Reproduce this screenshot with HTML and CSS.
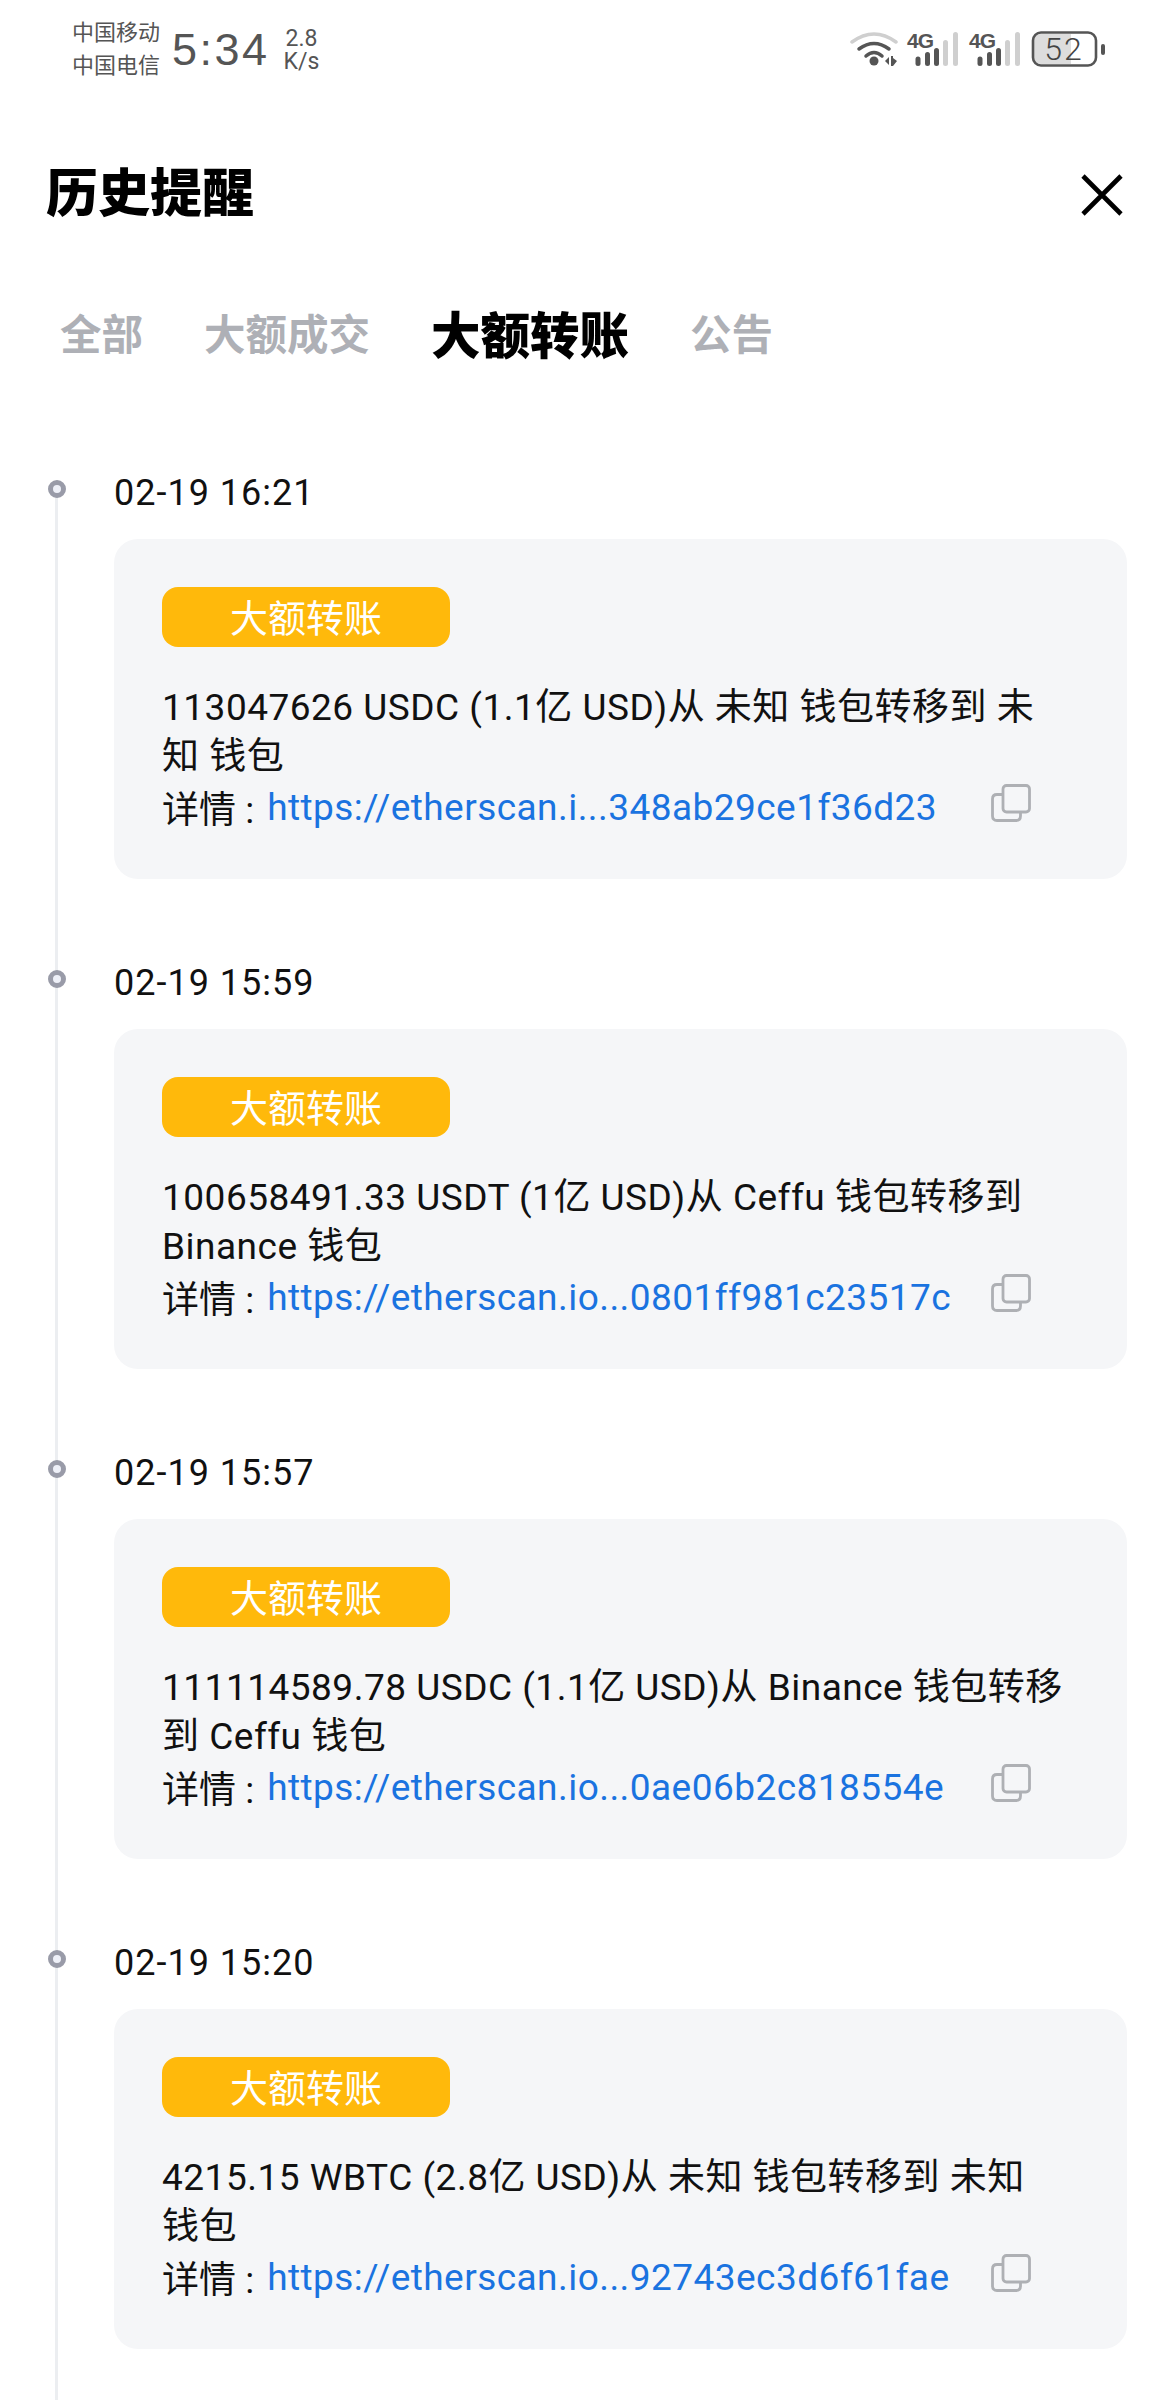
FILE: index.html
```html
<!DOCTYPE html>
<html lang="zh-CN">
<head>
    <meta charset="UTF-8">
    <meta name="viewport" content="width=device-width, initial-scale=1.0">
    <title>历史提醒</title>
    <link rel="stylesheet" href="styles.css">
</head>
<body>
    <div class="page">
        <div class="status-bar">
            <div class="carriers">
                <span>中国移动</span>
                <span>中国电信</span>
            </div>
            <div class="clock">5:34</div>
            <div class="speed">
                <span>2.8</span>
                <span>K/s</span>
            </div>
            <svg class="status-icons" width="256" height="48" viewBox="0 -8 256 48">
                <!-- wifi -->
                <path d="M2 12 Q24 -4 46 12" fill="none" stroke="#cfcfcf" stroke-width="3.5" stroke-linecap="round"/>
                <path d="M9 19 Q24 8 39 19" fill="none" stroke="#555" stroke-width="3.5" stroke-linecap="round"/>
                <path d="M16 26 Q24 19 32 26" fill="none" stroke="#555" stroke-width="3.5" stroke-linecap="round"/>
                <circle cx="24" cy="31" r="4.5" fill="#555"/>
                <path d="M35 31 L39 27 V35 Z M41 26 V36 H43 L47 31 L43 28 V26 Z" fill="#555"/>
                <!-- sim 1 -->
                <text class="net-label" x="57" y="18">4G</text>
                <rect x="65.5" y="26.5" width="5" height="9.5" rx="2.5" fill="#555"/>
                <rect x="75" y="22" width="5" height="14" rx="2.5" fill="#555"/>
                <rect x="84" y="18" width="5" height="18" rx="2.5" fill="#555"/>
                <rect x="93" y="10" width="5" height="26" rx="2.5" fill="#cfcfcf"/>
                <rect x="103" y="2" width="5" height="34" rx="2.5" fill="#cfcfcf"/>
                <!-- sim 2 -->
                <text class="net-label" x="119" y="18">4G</text>
                <rect x="127.5" y="26.5" width="5" height="9.5" rx="2.5" fill="#555"/>
                <rect x="137" y="22" width="5" height="14" rx="2.5" fill="#555"/>
                <rect x="146" y="18" width="5" height="18" rx="2.5" fill="#555"/>
                <rect x="155" y="10" width="5" height="26" rx="2.5" fill="#cfcfcf"/>
                <rect x="165" y="2" width="5" height="34" rx="2.5" fill="#cfcfcf"/>
                <!-- battery -->
                <path d="M191 4 H221 V34 H191 Q184 34 184 27 V11 Q184 4 191 4 Z" fill="#dddddd"/>
                <rect x="183" y="2.5" width="63" height="33" rx="8" fill="none" stroke="#555" stroke-width="2.6"/>
                <rect x="251" y="14" width="4" height="11" rx="2" fill="#555"/>
                <text class="battery-label" x="214" y="30" text-anchor="middle">52</text>
            </svg>
        </div>

        <div class="header">
            <h1>历史提醒</h1>
            <svg class="close" width="42" height="42" viewBox="0 0 42 42">
                <path d="M2 2 L40 40 M40 2 L2 40" stroke="#000" stroke-width="4.6" fill="none"/>
            </svg>
        </div>

        <div class="tabs">
            <span class="tab">全部</span>
            <span class="tab">大额成交</span>
            <span class="tab active">大额转账</span>
            <span class="tab">公告</span>
        </div>

        <div class="timeline">
            <div class="item">
                <div class="time">02-19 16:21</div>
                <div class="card">
                    <div class="tag">大额转账</div>
                    <p class="msg">113047626 USDC (1.1亿 USD)从 未知 钱包转移到 未<br>知 钱包</p>
                    <div class="detail">
                        <span>详情 :</span>
                        <a class="link">https://etherscan.i...348ab29ce1f36d23</a>
                        <svg class="copy" width="40" height="38" viewBox="0 0 40 38"><path d="M29.5 29 V32 Q29.5 36.5 25 36.500 H6 Q1.500 36.500 1.500 32 V15 Q1.500 10.500 6 10.500 H11" fill="none" stroke="#aeb0b4" stroke-width="2.800"/><rect x="12" y="1.500" width="26.500" height="26.500" rx="3.500" fill="none" stroke="#aeb0b4" stroke-width="2.800"/></svg>
                    </div>
                </div>
            </div>
            <div class="item">
                <div class="time">02-19 15:59</div>
                <div class="card">
                    <div class="tag">大额转账</div>
                    <p class="msg">100658491.33 USDT (1亿 USD)从 Ceffu 钱包转移到<br>Binance 钱包</p>
                    <div class="detail">
                        <span>详情 :</span>
                        <a class="link">https://etherscan.io...0801ff981c23517c</a>
                        <svg class="copy" width="40" height="38" viewBox="0 0 40 38"><path d="M29.5 29 V32 Q29.5 36.5 25 36.500 H6 Q1.500 36.500 1.500 32 V15 Q1.500 10.500 6 10.500 H11" fill="none" stroke="#aeb0b4" stroke-width="2.800"/><rect x="12" y="1.500" width="26.500" height="26.500" rx="3.500" fill="none" stroke="#aeb0b4" stroke-width="2.800"/></svg>
                    </div>
                </div>
            </div>
            <div class="item">
                <div class="time">02-19 15:57</div>
                <div class="card">
                    <div class="tag">大额转账</div>
                    <p class="msg">111114589.78 USDC (1.1亿 USD)从 Binance 钱包转移<br>到 Ceffu 钱包</p>
                    <div class="detail">
                        <span>详情 :</span>
                        <a class="link">https://etherscan.io...0ae06b2c818554e</a>
                        <svg class="copy" width="40" height="38" viewBox="0 0 40 38"><path d="M29.5 29 V32 Q29.5 36.5 25 36.500 H6 Q1.500 36.500 1.500 32 V15 Q1.500 10.500 6 10.500 H11" fill="none" stroke="#aeb0b4" stroke-width="2.800"/><rect x="12" y="1.500" width="26.500" height="26.500" rx="3.500" fill="none" stroke="#aeb0b4" stroke-width="2.800"/></svg>
                    </div>
                </div>
            </div>
            <div class="item">
                <div class="time">02-19 15:20</div>
                <div class="card">
                    <div class="tag">大额转账</div>
                    <p class="msg">4215.15 WBTC (2.8亿 USD)从 未知 钱包转移到 未知<br>钱包</p>
                    <div class="detail">
                        <span>详情 :</span>
                        <a class="link">https://etherscan.io...92743ec3d6f61fae</a>
                        <svg class="copy" width="40" height="38" viewBox="0 0 40 38"><path d="M29.5 29 V32 Q29.5 36.5 25 36.500 H6 Q1.500 36.500 1.500 32 V15 Q1.500 10.500 6 10.500 H11" fill="none" stroke="#aeb0b4" stroke-width="2.800"/><rect x="12" y="1.500" width="26.500" height="26.500" rx="3.500" fill="none" stroke="#aeb0b4" stroke-width="2.800"/></svg>
                    </div>
                </div>
            </div>
        </div>
    </div>
</body>
</html>
```

FILE: styles.css
```css
body {
    margin: 0;
    background-color: #fff;
    font-family: Roboto, "Noto Sans CJK SC", sans-serif;
}
.page {
    height: 2400px;
    overflow: hidden;
}
.status-bar {
    display: flex;
    align-items: center;
    height: 100px;
    padding-left: 72px;
    color: #555;
}
.carriers {
    display: flex;
    flex-direction: column;
    gap: 9px;
    font-size: 22px;
    line-height: 24px;
    margin-top: -1px;
}
.clock {
    font-family: "Liberation Sans", sans-serif;
    font-size: 45px;
    letter-spacing: 2.5px;
    margin-left: 12px;
}
.speed {
    display: flex;
    flex-direction: column;
    align-items: center;
    font-size: 23px;
    line-height: 23px;
    margin-left: 14px;
}
.status-icons {
    margin-left: auto;
    margin-right: 70px;
    margin-top: -9px;
}
.net-label {
    font-family: "Liberation Sans", sans-serif;
    font-size: 21px;
    font-weight: bold;
    letter-spacing: -1px;
    fill: #555;
}
.battery-label {
    font-family: Roboto, sans-serif;
    font-size: 32px;
    font-weight: 300;
    letter-spacing: 2px;
    fill: #444;
}
.header {
    display: flex;
    align-items: center;
    justify-content: space-between;
    height: 64px;
    margin-top: 57px;
    padding: 0 53px 0 46px;
}
h1 {
    margin: 0;
    font-size: 52px;
    font-weight: 900;
    color: #000;
}
.close {
    margin-top: 12px;
}
.tabs {
    display: flex;
    align-items: center;
    gap: 61px;
    height: 60px;
    margin-top: 81px;
    padding-left: 60px;
}
.tab {
    font-size: 41.5px;
    font-weight: 700;
    color: #aeb0b6;
}
.tab.active {
    font-size: 49.5px;
    font-weight: 900;
    color: #000;
}
.timeline {
    position: relative;
    margin-top: 105px;
    padding: 0 49px 0 114px;
}
.timeline::before {
    content: "";
    position: absolute;
    left: 55px;
    top: 30px;
    bottom: -500px;
    width: 3px;
    background: #eceef1;
}
.item {
    position: relative;
    margin-bottom: 78px;
}
.item::before {
    content: "";
    position: absolute;
    left: -66px;
    top: 13px;
    width: 8px;
    height: 8px;
    border: 5px solid #999ba8;
    border-radius: 50%;
    background: #eef0f8;
}
.time {
    height: 72px;
    line-height: 52px;
    font-size: 36px;
    letter-spacing: 1px;
    color: #111;
}
.card {
    height: 340px;
    box-sizing: border-box;
    padding: 48px 48px 0;
    background: #f5f6f8;
    border-radius: 24px;
}
.tag {
    width: 288px;
    height: 60px;
    line-height: 64px;
    text-align: center;
    font-size: 38px;
    color: #fff;
    background: #ffb90b;
    border-radius: 16px;
}
.msg {
    margin: 36px 0 0;
    font-size: 37px;
    letter-spacing: 0.5px;
    line-height: 49px;
    color: #111;
    white-space: nowrap;
}
.detail {
    display: flex;
    align-items: center;
    height: 54px;
    margin-top: -1px;
    font-size: 37px;
    color: #111;
    white-space: nowrap;
}
.link {
    margin-left: 13px;
    letter-spacing: 0.45px;
    color: #1a73e0;
}
.copy {
    margin-left: auto;
    margin-right: 48px;
    margin-top: -8px;
}
```
